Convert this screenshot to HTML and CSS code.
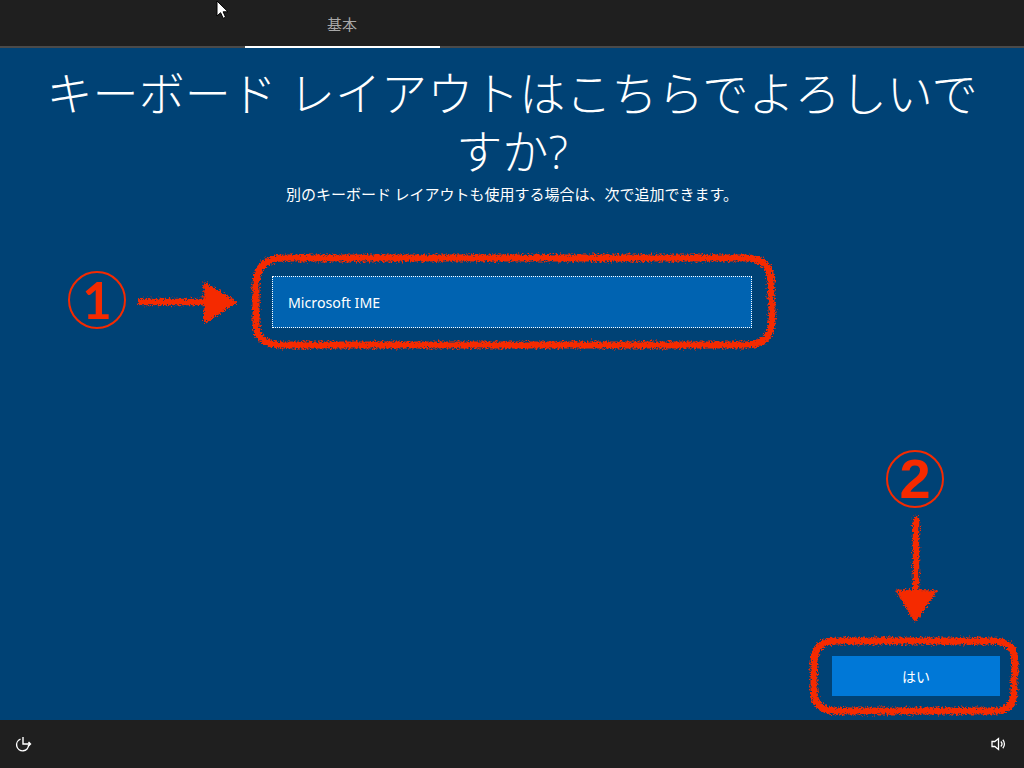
FILE: index.html
```html
<!DOCTYPE html>
<html lang="ja">
<head>
<meta charset="utf-8">
<title>キーボード レイアウト</title>
<link rel="stylesheet" href="styles.css">
</head>
<body>
<div class="page">
  <header class="topbar">
    <div class="tab">基本</div>
  </header>
  <main class="content">
    <h1 class="title">キーボード レイアウトはこちらでよろしいですか?</h1>
    <p class="subtitle">別のキーボード レイアウトも使用する場合は、次で追加できます。</p>
    <div class="list">
      <div class="option">Microsoft IME</div>
    </div>
    <div class="actions">
      <button class="yes">はい</button>
    </div>
  </main>
  <footer class="bottombar">
    <svg class="icon" width="18" height="18" viewBox="0 0 18 18" fill="none" stroke="#fff" stroke-width="1.4">
      <path d="M6.5 4.2A6 6 0 1 0 14.6 10"/>
      <path d="M9 2v7h7.5M14.5 7l2 2-2 2"/>
    </svg>
    <svg class="icon" width="16" height="16" viewBox="0 0 16 16" fill="none" stroke="#fff" stroke-width="1.3">
      <path d="M1 5.5h2.8L7.5 2.5v11L3.8 10.5H1z"/>
      <path d="M9.8 5.5a3.6 3.6 0 0 1 0 5M11.8 3.8a6.2 6.2 0 0 1 0 8.4"/>
    </svg>
  </footer>

  <svg class="cursor" width="14" height="20" viewBox="0 0 14 20">
    <path d="M1 1v15l3.6-3.3 2.6 5.6 2.4-1.1-2.5-5.4H12z" fill="#fff" stroke="#000" stroke-width="1"/>
  </svg>

  <svg class="marks" width="1024" height="768" viewBox="0 0 1024 768" fill="none">
    <defs>
      <filter id="rough" x="0" y="0" width="1024" height="768" filterUnits="userSpaceOnUse">
        <feTurbulence type="fractalNoise" baseFrequency="0.55" numOctaves="3" seed="4"/>
        <feDisplacementMap in="SourceGraphic" scale="7" xChannelSelector="R" yChannelSelector="G"/>
      </filter>
    </defs>
    <g filter="url(#rough)" stroke="#f52a00" fill="none" stroke-linecap="round">
      <path stroke-width="7" d="M771 297V282Q771 258 745 258H285Q256 258 256 285V322Q256 345 282 345H745Q772 345 772 320V303"/>
      <path stroke-width="6.5" d="M141 302H205"/>
      <path fill="#f52a00" stroke-width="1" d="M204 282L237 302L205 323Z"/>
      <path stroke-width="7" d="M1015 674V662Q1015 641 993 641H836Q814 641 814 663V690Q814 711 836 711H993Q1014 711 1014 692V680"/>
      <path stroke-width="6.5" d="M916 519V590"/>
      <path fill="#f52a00" stroke-width="1" d="M896 590L937 591L915 622Z"/>
    </g>
  </svg>
  <div class="badge badge-one">1</div>
  <div class="badge badge-two">2</div>
</div>
</body>
</html>
```
FILE: styles.css
```css
* { box-sizing: border-box; }
html, body { margin: 0; height: 100%; }
body { background: #004275; overflow: hidden; }
.page {
  position: relative;
  width: 1024px;
  height: 768px;
  display: flex;
  flex-direction: column;
  background: #004275;
  color: #fff;
  font-family: "Noto Sans CJK JP", "Noto Sans", sans-serif;
}
.topbar {
  height: 48px;
  flex: none;
  background: #1f1f1f;
  border-bottom: 2px solid #4a4a4a;
  padding-left: 245px;
  display: flex;
}
.tab {
  width: 195px;
  height: 48px;
  border-bottom: 2px solid #fff;
  text-align: center;
  padding-top: 14px;
  font-size: 15px;
  line-height: 20px;
  color: #a8a8a8;
  text-indent: -1px;
}
.content {
  flex: 1;
  display: flex;
  flex-direction: column;
  align-items: center;
  padding: 17px 32px 0;
}
.title {
  margin: 0;
  width: 960px;
  font-family: "Open Sans", "Noto Sans CJK JP", sans-serif;
  font-size: 46.1px;
  line-height: 58px;
  font-weight: 300;
  text-align: center;
}
.subtitle {
  margin: 3px 0 0;
  font-size: 15px;
  line-height: 20px;
}
.list {
  margin-top: 72px;
  width: 480px;
}
.option {
  height: 52px;
  background: #0063b1;
  outline: 1px dotted #fff;
  outline-offset: -1px;
  padding: 0 16px;
  display: flex;
  align-items: center;
  font-size: 14.2px;
  font-family: "Noto Sans", "Noto Sans CJK JP", sans-serif;
}
.actions {
  margin-top: auto;
  align-self: flex-end;
  margin-right: -8px;
  margin-bottom: 24px;
}
.yes {
  display: block;
  width: 168px;
  height: 40px;
  border: 0;
  padding: 0;
  background: #0078d7;
  color: #fff;
  font: inherit;
  font-size: 14px;
}
.bottombar {
  height: 48px;
  flex: none;
  background: #1f1f1f;
  display: flex;
  align-items: center;
  justify-content: space-between;
  padding: 0 17px 0 14px;
}
.cursor { position: absolute; left: 216px; top: 0; }
.marks { position: absolute; left: 0; top: 0; pointer-events: none; }
.badge {
  position: absolute;
  width: 58px;
  height: 58px;
  border: 2px solid #f52a00;
  border-radius: 50%;
  color: #f52a00;
  font-weight: 700;
  text-align: center;
}
.badge-one { left: 68px; top: 271px; font-family: Lato, sans-serif; font-size: 51px; line-height: 54px; }
.badge-two { left: 886px; top: 450px; font-family: "Liberation Sans", sans-serif; font-size: 56px; line-height: 54px; }
```
